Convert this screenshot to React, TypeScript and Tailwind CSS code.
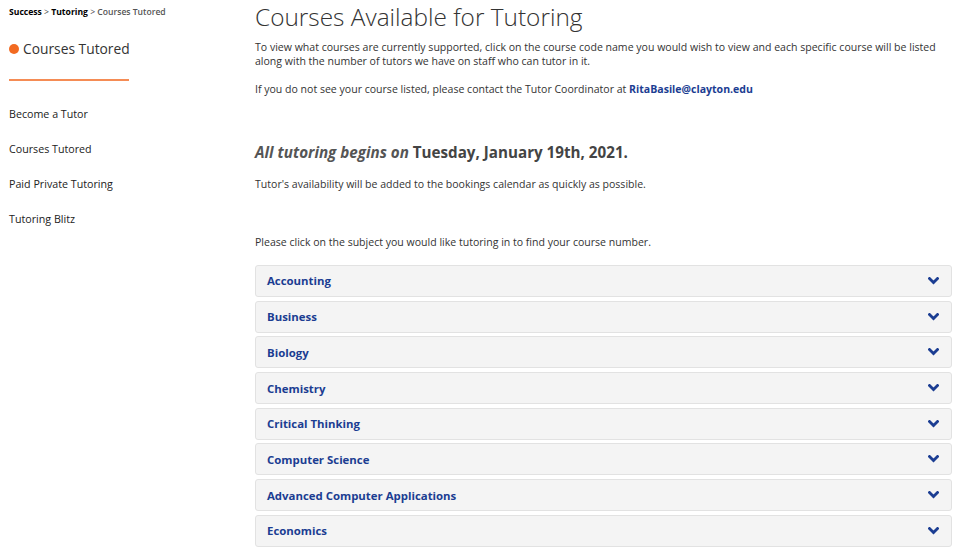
const subjects = [
  "Accounting",
  "Business",
  "Biology",
  "Chemistry",
  "Critical Thinking",
  "Computer Science",
  "Advanced Computer Applications",
  "Economics",
];

const navLinks = ["Become a Tutor", "Courses Tutored", "Paid Private Tutoring", "Tutoring Blitz"];

function Chevron() {
  return (
    <svg width="11" height="8" viewBox="0 0 11 8" fill="none" className="text-[#1b3d92]">
      <polyline points="1.5,1.5 5.5,5.5 9.5,1.5" stroke="currentColor" strokeWidth="2.8" strokeLinecap="square" />
    </svg>
  );
}

export default function App() {
  return (
    <div
      className="flex h-[547px] w-[977px] overflow-hidden bg-white text-[#333333]"
      style={{ fontFamily: '"Open Sans", "Noto Sans", sans-serif' }}
    >
      <aside className="w-[255px] shrink-0 pl-[9px]">
        <div className="pt-[6px] text-[8.6px] leading-[12px]">
          <span className="font-bold text-black">Success</span>
          <span className="text-[#444]"> &gt; </span>
          <span className="font-bold text-black">Tutoring</span>
          <span className="text-[#444]"> &gt; </span>
          <span className="font-semibold text-[#555]">Courses Tutored</span>
        </div>

        <div className="mt-[21px] flex items-center gap-[4px]">
          <span className="size-[10px] rounded-full bg-[#f26a21]" />
          <span className="text-[13.8px] leading-[20px] text-[#333]">Courses Tutored</span>
        </div>
        <div className="mt-[20px] h-[2px] w-[120px] bg-[#f58c55]" />

        <nav className="mt-[26px] flex flex-col gap-[20px]">
          {navLinks.map((link) => (
            <a key={link} href="#" className="text-[10.7px] leading-[15px] text-[#222]">
              {link}
            </a>
          ))}
        </nav>
      </aside>

      <main className="w-[697px] shrink-0">
        <h1 className="mt-[2px] text-[24.4px] font-light leading-[30px] text-[#333]">
          Courses Available for Tutoring
        </h1>
        <p className="mt-[8px] text-[10.55px] leading-[14px] text-[#333]">
          To view what courses are currently supported, click on the course code name you would wish to view and each
          specific course will be listed along with the number of tutors we have on staff who can tutor in it.
        </p>
        <p className="mt-[14px] text-[10.55px] leading-[14px] text-[#333]">
          If you do not see your course listed, please contact the Tutor Coordinator at{" "}
          <a href="#" className="font-bold text-[#1b3d92]">
            RitaBasile@clayton.edu
          </a>
        </p>

        <h2 className="mt-[45px] text-[15.2px] font-bold leading-[22px] text-[#444]">
          <em className="text-[#555]">All tutoring begins on</em> Tuesday, January 19th, 2021.
        </h2>
        <p className="mt-[14px] text-[10.55px] leading-[14px] text-[#333]">
          Tutor's availability will be added to the bookings calendar as quickly as possible.
        </p>
        <p className="mt-[44px] text-[10.55px] leading-[14px] text-[#333]">
          Please click on the subject you would like tutoring in to find your course number.
        </p>

        <div className="mt-[16px] flex flex-col gap-[3.7px]">
          {subjects.map((s) => (
            <button
              key={s}
              type="button"
              className="flex h-[32px] items-center justify-between rounded-[3px] border border-[#e2e2e2] bg-[#f4f4f4] pl-[11px] pr-[12px] text-left"
            >
              <span className="text-[11.4px] font-bold text-[#1b3d92]">{s}</span>
              <Chevron />
            </button>
          ))}
        </div>
      </main>
    </div>
  );
}
